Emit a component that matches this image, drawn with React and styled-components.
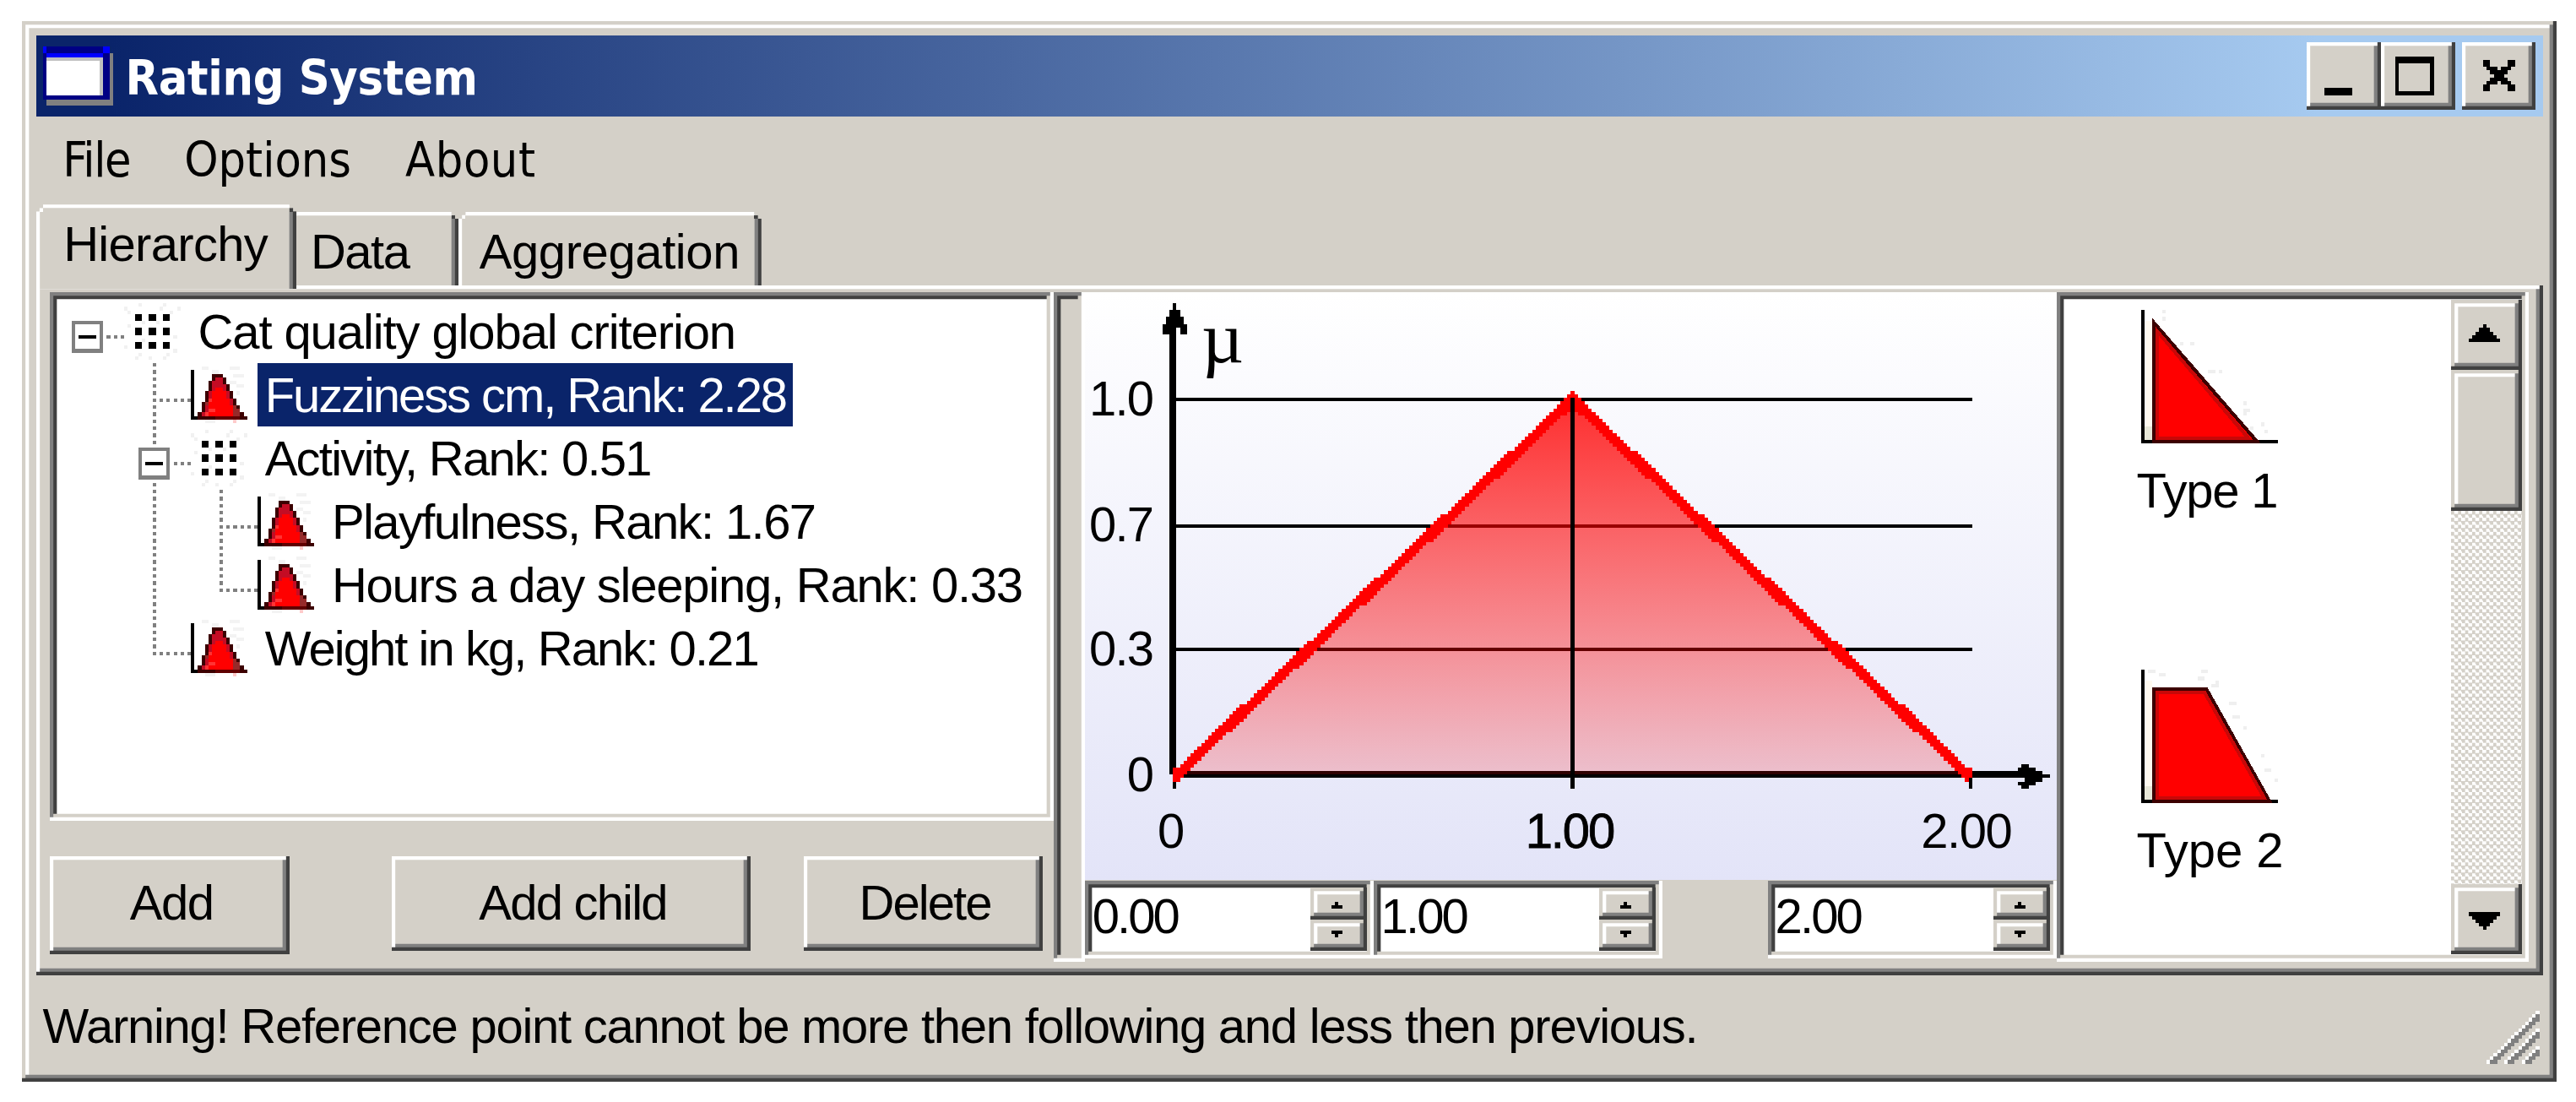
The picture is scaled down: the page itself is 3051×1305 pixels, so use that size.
import React from 'react';
import styled, { createGlobalStyle, css } from 'styled-components';

// One unit is one pixel of the classic desktop theme.
const u = n => `${(n * 4.17).toFixed(2)}px`;

const colors = {
  face: '#d4d0c8',
  light: '#fff',
  shadow: '#808080',
  dark: '#404040',
  highlight: '#0a246a',
};

const GlobalStyle = createGlobalStyle`
  body {
    margin: 0;
    background: #fff;
    overflow: hidden;
  }
`;

const raised = css`
  box-shadow: inset -${u(1)} -${u(1)} ${colors.dark}, inset ${u(1)} ${u(1)} ${colors.light},
    inset -${u(2)} -${u(2)} ${colors.shadow};
`;

const raisedSoft = css`
  box-shadow: inset -${u(1)} -${u(1)} ${colors.dark}, inset ${u(1)} ${u(1)} ${colors.face},
    inset -${u(2)} -${u(2)} ${colors.shadow}, inset ${u(2)} ${u(2)} ${colors.light};
`;

const sunken = css`
  box-shadow: inset -${u(1)} -${u(1)} ${colors.light}, inset ${u(1)} ${u(1)} ${colors.shadow},
    inset -${u(2)} -${u(2)} ${colors.face}, inset ${u(2)} ${u(2)} ${colors.dark};
`;

const Window = styled.div`
  box-sizing: border-box;
  width: ${u(720)};
  height: ${u(301)};
  margin: 25.4px 0 0 26px;
  padding: ${u(4)};
  background: ${colors.face};
  font-family: 'Liberation Sans', Arial, sans-serif;
  font-size: 58px;
  color: #000;
  white-space: nowrap;
  ${raisedSoft};
`;

const Text = styled.span`
  letter-spacing: ${({ $spacing }) => $spacing || 0}px;
`;

const TitleBar = styled.header`
  display: flex;
  box-sizing: border-box;
  height: ${u(23)};
  padding: ${u(2)} ${u(2)} 0;
  background: linear-gradient(to right, ${colors.highlight} 3%, #a6caf0 91%);
`;

const Title = styled.h1`
  flex: 1;
  margin: 0 0 0 ${u(3.4)};
  font: bold 57px / ${u(20.5)} 'DejaVu Sans Condensed', Tahoma, sans-serif;
  letter-spacing: -0.3px;
  color: #fff;
`;

const CaptionButton = styled.button`
  width: ${u(21)};
  height: ${u(19)};
  margin-left: ${({ $gap }) => u($gap || 0)};
  padding: 0;
  border: 0;
  background: ${colors.face};
  ${raised};
`;

const Pixels = styled.svg`
  display: block;
  flex: none;
  width: ${({ $w }) => u($w)};
  height: ${({ $h }) => u($h)};
  shape-rendering: crispEdges;
`;

const MenuBar = styled.nav`
  display: flex;
  gap: 64px;
  height: ${u(25)};
  padding-left: ${u(7.6)};
  font: 57px / ${u(24.6)} 'DejaVu Sans Condensed', Tahoma, sans-serif;
`;

const TabStrip = styled.div`
  display: flex;
  align-items: flex-end;
  height: ${u(24)};
  margin-bottom: -${u(1)};
`;

const Tab = styled.div`
  position: relative;
  box-sizing: border-box;
  width: ${({ $w }) => u($w)};
  height: ${({ $active }) => u($active ? 24 : 21)};
  margin: 0 0 ${({ $active }) => u($active ? 0 : 1)} ${({ $tuck }) => u($tuck || 0)};
  padding-left: ${({ $pad }) => u($pad)};
  z-index: ${({ $active }) => ($active ? 1 : 0)};
  background: ${colors.face};
  line-height: ${u(22.5)};
  box-shadow: inset -${u(1)} 0 ${colors.dark}, inset ${u(1)} ${u(1)} ${colors.light},
    inset -${u(2)} 0 ${colors.shadow};
  clip-path: polygon(
    0 ${u(2)},
    ${u(1)} ${u(2)},
    ${u(1)} ${u(1)},
    ${u(2)} ${u(1)},
    ${u(2)} 0,
    calc(100% - ${u(2)}) 0,
    calc(100% - ${u(2)}) ${u(1)},
    calc(100% - ${u(1)}) ${u(1)},
    calc(100% - ${u(1)}) ${u(2)},
    100% ${u(2)},
    100% 100%,
    0 100%
  );

  &::before,
  &::after {
    content: '';
    position: absolute;
    top: ${u(1)};
    left: ${u(1)};
    width: ${u(1)};
    height: ${u(1)};
    background: ${colors.light};
  }

  &::after {
    left: auto;
    right: ${u(1)};
    background: ${colors.dark};
  }
`;

const Page = styled.main`
  display: flex;
  box-sizing: border-box;
  height: ${u(196)};
  padding: ${u(2)} ${u(4)} 0;
  background: ${colors.face};
  ${raised};
`;

const TreeColumn = styled.section`
  width: ${u(285)};
`;

const Tree = styled.ul`
  box-sizing: border-box;
  height: ${u(150)};
  margin: 0;
  padding: ${u(2)};
  background: #fff;
  list-style: none;
  ${sunken};
`;

const TreeRow = styled.li`
  display: flex;
  height: ${u(18)};
  line-height: ${u(18)};
`;

const TreeLabel = styled(Text)`
  margin-left: ${u(3)};
  padding: 0 ${u(2)};

  ${({ $selected }) =>
    $selected &&
    css`
      background: ${colors.highlight};
      color: #fff;
    `};
`;

const Actions = styled.div`
  display: flex;
  align-items: flex-start;
  margin-top: ${u(10)};
`;

const ActionButton = styled.button`
  display: flex;
  align-items: flex-start;
  justify-content: center;
  width: ${({ $w }) => u($w)};
  height: ${({ $h }) => u($h)};
  margin: 0 ${({ $gap }) => u($gap || 0)} 0 0;
  padding: 0 0 0 ${u(1)};
  border: 0;
  background: ${colors.face};
  font: inherit;
  line-height: ${u(26.6)};
  color: inherit;
  ${raised};
`;

const Splitter = styled.div`
  width: ${u(9)};
  height: ${u(190)};
  background: ${colors.face};
  ${sunken};
`;

const ChartColumn = styled.section`
  width: ${u(276)};
`;

const Chart = styled.svg`
  display: block;
  width: ${u(276)};
  height: ${u(167)};
  font-family: 'Liberation Sans', Arial, sans-serif;
  font-size: 13.9px;
`;

const SpinRow = styled.div`
  display: flex;
`;

const SpinBox = styled.div`
  display: flex;
  justify-content: space-between;
  box-sizing: border-box;
  width: ${u(82)};
  height: ${u(22)};
  margin-left: ${({ $gap }) => u($gap || 0)};
  padding: ${u(2)};
  background: #fff;
  line-height: ${u(16.3)};
  ${sunken};
`;

const SpinButtons = styled.div`
  width: ${u(16)};
`;

const SpinButton = styled.div`
  height: ${u(9)};
  background: ${colors.face};
  ${raisedSoft};
`;

const Gallery = styled.section`
  display: flex;
  box-sizing: border-box;
  width: ${u(134)};
  height: ${u(190)};
  padding: ${u(2)};
  background: #fff;
  ${sunken};
`;

const GalleryList = styled.div`
  flex: 1;
  padding: ${u(3)} 0 0 ${u(20.6)};
`;

const GalleryItem = styled.figure`
  height: ${u(102)};
  margin: 0;
`;

const Caption = styled.figcaption`
  margin-top: ${u(4.2)};
  line-height: ${u(18)};
`;

const ScrollBar = styled.div`
  display: flex;
  flex-direction: column;
  width: ${u(20)};
  background: repeating-conic-gradient(#fff 0 25%, ${colors.face} 0 50%) 0 0 / ${u(2)} ${u(2)};
`;

const ScrollButton = styled.div`
  height: ${({ $h }) => u($h)};
  background: ${colors.face};
  ${raisedSoft};

  &:last-child {
    margin-top: auto;
  }
`;

const StatusBar = styled.footer`
  display: flex;
  justify-content: space-between;
  align-items: flex-end;
  box-sizing: border-box;
  height: ${u(26)};
  padding: 0 ${u(1)} ${u(1)} ${u(1.9)};
`;

const StatusText = styled(Text)`
  height: ${u(25)};
  line-height: ${u(28.6)};
`;

// rows: [y, x0, x1]
const spans = rows => rows.map(([y, x0, x1]) => `M${x0} ${y}H${x1}V${y + 1}H${x0}Z`).join('');

const CROSS = spans([
  [0, 0, 2], [0, 7, 9], [1, 0, 2], [1, 7, 9],
  [2, 1, 4], [2, 5, 8], [3, 2, 7], [4, 3, 6], [5, 2, 7], [6, 1, 4], [6, 5, 8],
  [7, 0, 2], [7, 7, 9], [8, 0, 2], [8, 7, 9],
]);

const BELL = [
  [2, 6, 9], [3, 6, 10], [4, 5, 10], [5, 5, 11], [6, 5, 11], [7, 4, 12], [8, 4, 12],
  [9, 4, 13], [10, 3, 13], [11, 3, 14], [12, 3, 14], [13, 2, 15], [14, 2, 16],
];

const BELL_FILL = BELL.slice(1, -1).map(([y, a, b]) => [y, a + 1, b - 1]);
const BELL_CORE = BELL.slice(4, -1).map(([y, a, b]) => [y, a + 2, b - 2]);

const TitleIcon = styled(Pixels)`
  margin-top: ${u(1)};
`;

function AppIcon() {
  return (
    <TitleIcon $w={20} $h={17} viewBox="0 0 20 17">
      <path fill="#808080" d="M1 2H20V17H1Z" />
      <path fill="#000084" d="M0 0H19V15H0Z" />
      <path fill="#00f" d="M0 0H1V2H0ZM17 0H19V2H17ZM1 2H17V3H1Z" />
      <path fill="#c0c0c0" d="M1 3H17V14H1Z" />
      <path fill="#fff" d="M1 4H16V14H1Z" />
    </TitleIcon>
  );
}

function BellIcon() {
  return (
    <Pixels $w={16} $h={18} viewBox="0 -1 16 18">
      <path
        fill="#f3f3f3"
        d={spans([
          [0, 3, 5], [1, 6, 8], [0, 11, 14], [2, 12, 15], [4, 11, 13],
          [5, 13, 15], [7, 13, 14], [15, 4, 7],
        ])}
      />
      <path fill="#ffcaca" d="M12 15H13V16H12Z" />
      <path d="M0 1H1V14H16V15H0Z" />
      <path fill="#3c0000" d={spans(BELL)} />
      <path fill="#c40c24" d={spans(BELL_FILL)} />
      <path fill="#f00" d={spans(BELL_CORE)} />
      <path fill="#962a2a" d="M12 11H13V14H12ZM13 12H14V14H13ZM4 10H5V11H4Z" />
      <path fill="#f33" d="M5 9H6V10H5ZM5 12H7V13H5ZM4 13H5V14H4Z" />
      <path fill="#600000" d="M7 14H14V15H7Z" />
    </Pixels>
  );
}

function GroupIcon() {
  const dots = [3, 7, 11];

  return (
    <Pixels $w={16} $h={18} viewBox="0 -1 16 18">
      <path
        fill="#f1f1f1"
        d={spans([
          [0, 4, 5], [1, 0, 1], [0, 11, 12], [1, 10, 11], [2, 1, 2], [1, 15, 16], [2, 13, 14], [5, 5, 6],
          [5, 9, 10], [6, 1, 2], [9, 14, 15], [10, 5, 6], [12, 0, 1], [13, 14, 15], [14, 4, 5],
          [14, 12, 13], [15, 3, 4], [15, 7, 8], [15, 11, 12],
        ])}
      />
      {dots.map(y => dots.map(x => <rect key={`${x}-${y}`} x={x} y={y} width="2" height="2" />))}
    </Pixels>
  );
}

function TreeGutter({ depth, expandable, top, through }) {
  const width = 19 * (depth + 1);
  const dots = [];

  const addColumn = (level, from, to) => {
    for (let y = from; y < to; y += 2) {
      dots.push([y, 8 + 19 * level, 9 + 19 * level]);
    }
  };

  if (expandable) {
    for (let x = 14; x < 19; x += 2) {
      dots.push([10, x + 19 * depth, x + 1 + 19 * depth]);
    }
  } else {
    for (let x = -11; x < 0; x += 2) {
      dots.push([10, width + x, width + x + 1]);
    }
  }

  if (top) {
    addColumn(depth, 0, expandable ? 6 : 11);
  }

  through.forEach(level => addColumn(level, level === depth && expandable ? 16 : 0, 18));

  return (
    <Pixels $w={width} $h={18} viewBox={`0 0 ${width} 18`}>
      <path fill="#808080" d={spans(dots)} />
      {expandable ? (
        <g transform={`translate(${19 * depth + 4} 6)`}>
          <path fill="#808080" d="M0 0H9V9H0Z" />
          <path fill="#fff" d="M1 1H8V8H1Z" />
          <path d="M2 4H7V5H2Z" />
        </g>
      ) : null}
    </Pixels>
  );
}

const TREE = [
  { text: 'Cat quality global criterion', spacing: -1.1, depth: 0, expandable: true, through: [] },
  { text: 'Fuzziness cm, Rank: 2.28', spacing: -2.08, depth: 1, top: true, through: [1], selected: true },
  { text: 'Activity, Rank: 0.51', spacing: -1.75, depth: 1, top: true, expandable: true, through: [1] },
  { text: 'Playfulness, Rank: 1.67', spacing: -1.6, depth: 2, top: true, through: [1, 2] },
  { text: 'Hours a day sleeping, Rank: 0.33', spacing: -1.24, depth: 2, top: true, through: [1] },
  { text: 'Weight in kg, Rank: 0.21', spacing: -1.95, depth: 1, top: true, through: [] },
];

// Stepped pen line from the origin to the peak, mirrored for the falling side.
const PEN_ROWS = [];
for (let y = 28; y < 139; y += 1) {
  const x0 = Math.max(25, 165 - y - Math.floor((y - 45) / 18));
  const x1 = Math.min(139, 169 - y - Math.floor((y - 53) / 18));

  PEN_ROWS.push([y, x0, Math.max(x1, x0 + 1)], [y, 277 - Math.max(x1, x0 + 1), 277 - x0]);
}

const ARROW_UP = [
  [3, 25, 26], [4, 25, 26], [5, 24, 27], [6, 24, 27], [7, 23, 28], [8, 23, 28],
  [9, 22, 29], [10, 22, 26], [10, 27, 29], [11, 22, 24], [11, 27, 29],
];

const ARROW_RIGHT = [
  [134, 266, 268], [135, 265, 270], [136, 267, 272], [137, 266, 274],
  [138, 267, 272], [139, 265, 270], [140, 266, 268],
];

function MembershipChart() {
  return (
    <Chart viewBox="0 0 276 167">
      <defs>
        <linearGradient id="sky" x1="0" y1="0" x2="0" y2="1">
          <stop offset="0" stopColor="#fff" />
          <stop offset="1" stopColor="#e3e4f8" />
        </linearGradient>
        <linearGradient id="area" x1="0" y1="0" x2="0" y2="1">
          <stop offset="0" stopColor="#f00" stopOpacity="0.82" />
          <stop offset="1" stopColor="#f00" stopOpacity="0.18" />
        </linearGradient>
      </defs>
      <g shapeRendering="crispEdges">
        <path fill="url(#sky)" d="M0 0H276V167H0Z" />
        <path d="M26 30H252V31H26ZM26 66H252V67H26ZM26 101H252V102H26Z" />
        <path d="M24 8H26V137H24ZM26 136H267V138H26Z" />
        <path d={spans(ARROW_UP)} />
        <path d={spans(ARROW_RIGHT)} />
        <path fill="url(#area)" d="M25.5 137L138.5 30L251.5 137Z" />
        <path fill="#f00" d={spans(PEN_ROWS)} />
        <path d="M138 30H139V141H138ZM25 139H26V141H25ZM251 138H252V141H251Z" />
      </g>
      <text x="33.1" y="20" fontFamily="'Liberation Serif', 'Times New Roman', serif" fontSize="20.8">
        µ
      </text>
      <g textAnchor="end" letterSpacing="-0.45">
        <text x="19.2" y="34.9">1.0</text>
        <text x="19.2" y="70.8">0.7</text>
        <text x="19.2" y="106">0.3</text>
        <text x="19.2" y="141.8">0</text>
      </g>
      <g letterSpacing="-0.35">
        <text x="20.6" y="157.9">0</text>
        <text x="125.1" y="157.9" stroke="#000" strokeWidth="0.2" letterSpacing="-0.5">1.00</text>
        <text x="237.5" y="157.9">2.00</text>
      </g>
    </Chart>
  );
}

function Spin({ value, gap }) {
  return (
    <SpinBox $gap={gap}>
      <Text $spacing={-2.9}>{value}</Text>
      <SpinButtons>
        <SpinButton>
          <Pixels $w={16} $h={9} viewBox="0 0 16 9">
            <path d="M7 4H8V5H9V6H6V5H7Z" />
          </Pixels>
        </SpinButton>
        <SpinButton>
          <Pixels $w={16} $h={9} viewBox="0 0 16 9">
            <path d="M6 3H9V4H8V5H7V4H6Z" />
          </Pixels>
        </SpinButton>
      </SpinButtons>
    </SpinBox>
  );
}

const SHAPES = [
  {
    name: 'Type 1',
    spacing: -1.2,
    outline: 'M3.5 3.5L33 37.5H3.5Z',
    edge: 'M4.5 6L30.5 36.5H4.5Z',
    specks: [
      [2, 6, 7], [0, 6, 7], [9, 11, 12], [9, 14, 15], [17, 19, 21], [17, 22, 23],
      [26, 29, 30], [28, 29, 31], [29, 29, 30], [32, 34, 35], [34, 35, 36], [33, 31, 32],
    ],
  },
  {
    name: 'Type 2',
    spacing: 0,
    outline: 'M3.5 5.5H18.5L36.5 37.5H3.5Z',
    edge: 'M4.5 6.5H18L35 36.5H4.5Z',
    specks: [
      [0, 2, 4], [1, 5, 7], [0, 17, 19], [2, 16, 18], [3, 21, 22], [4, 20, 22],
      [9, 25, 27], [13, 26, 28], [16, 29, 30], [24, 34, 35], [28, 35, 37], [31, 38, 39],
    ],
  },
];

const ShapePixels = styled(Pixels)`
  margin-left: ${u(1.3)};
`;

function ShapeIcon({ outline, edge, specks }) {
  return (
    <ShapePixels $w={39} $h={38} viewBox="0 0 39 38">
      <path fill="#efefef" d={spans(specks)} />
      <path fill="#fffaf0" d="M1 3H3V33H1Z" />
      <path fill="#e8e8d8" d="M1 33H3V37H1Z" />
      <path d="M0 0H1V37H39V38H0Z" />
      <path fill="#f00" stroke="#3c0000" d={outline} />
      <path fill="#f00" stroke="#c80808" d={edge} />
    </ShapePixels>
  );
}

function ResizeGrip() {
  const white = [];
  const gray = [];

  [0, 5, 10].forEach(start => {
    for (let x = start; x < 15; x += 1) {
      const y = 14 - (x - start);

      white.push([y, x, x + 1]);
      gray.push([y, Math.min(x + 1, 15), Math.min(x + 3, 15)]);
    }
  });

  return (
    <Pixels $w={15} $h={15} viewBox="0 0 15 15">
      <path fill="#808080" d={spans(gray)} />
      <path fill="#fff" d={spans(white)} />
    </Pixels>
  );
}

export default function App() {
  return (
    <Window>
      <GlobalStyle />
      <TitleBar>
        <AppIcon />
        <Title>Rating System</Title>
        <CaptionButton aria-label="Minimize">
          <Pixels $w={21} $h={19} viewBox="0 0 21 19">
            <path d="M5 13H13V15H5Z" />
          </Pixels>
        </CaptionButton>
        <CaptionButton aria-label="Maximize">
          <Pixels $w={21} $h={19} viewBox="0 0 21 19">
            <path fillRule="evenodd" d="M4 4H15V15H4ZM5 6V14H14V6Z" />
          </Pixels>
        </CaptionButton>
        <CaptionButton aria-label="Close" $gap={2}>
          <Pixels $w={21} $h={19} viewBox="-6 -5 21 19">
            <path d={CROSS} />
          </Pixels>
        </CaptionButton>
      </TitleBar>
      <MenuBar>
        <Text $spacing={-1.4}>File</Text>
        <Text $spacing={0}>Options</Text>
        <Text $spacing={0.6}>About</Text>
      </MenuBar>
      <TabStrip>
        <Tab $active $w={74} $pad={7.8}>
          <Text $spacing={-0.7}>Hierarchy</Text>
        </Tab>
        <Tab $w={48} $pad={6} $tuck={-2}>
          <Text $spacing={-1.5}>Data</Text>
        </Tab>
        <Tab $w={86} $pad={5.9}>
          <Text $spacing={-0.4}>Aggregation</Text>
        </Tab>
      </TabStrip>
      <Page>
        <TreeColumn>
          <Tree>
            {TREE.map(({ text, spacing, selected, ...gutter }) => (
              <TreeRow key={text}>
                <TreeGutter {...gutter} />
                {gutter.expandable ? <GroupIcon /> : <BellIcon />}
                <TreeLabel $spacing={spacing} $selected={selected}>
                  {text}
                </TreeLabel>
              </TreeRow>
            ))}
          </Tree>
          <Actions>
            <ActionButton $w={68} $h={28} $gap={29}>
              <Text $spacing={-1.47}>Add</Text>
            </ActionButton>
            <ActionButton $w={102} $h={27} $gap={15}>
              <Text $spacing={-1.8}>Add child</Text>
            </ActionButton>
            <ActionButton $w={68} $h={27}>
              <Text $spacing={-1.9}>Delete</Text>
            </ActionButton>
          </Actions>
        </TreeColumn>
        <Splitter />
        <ChartColumn>
          <MembershipChart />
          <SpinRow>
            <Spin value="0.00" />
            <Spin value="1.00" />
            <Spin value="2.00" gap={30} />
          </SpinRow>
        </ChartColumn>
        <Gallery>
          <GalleryList>
            {SHAPES.map(({ name, spacing, ...shape }) => (
              <GalleryItem key={name}>
                <ShapeIcon {...shape} />
                <Caption>
                  <Text $spacing={spacing}>{name}</Text>
                </Caption>
              </GalleryItem>
            ))}
          </GalleryList>
          <ScrollBar>
            <ScrollButton $h={20}>
              <Pixels $w={20} $h={20} viewBox="0 0 20 20">
                <path d={spans([[7, 9, 10], [8, 8, 11], [9, 7, 12], [10, 6, 13], [11, 5, 14]])} />
              </Pixels>
            </ScrollButton>
            <ScrollButton $h={40} />
            <ScrollButton $h={20}>
              <Pixels $w={20} $h={20} viewBox="0 0 20 20">
                <path d={spans([[8, 5, 14], [9, 6, 13], [10, 7, 12], [11, 8, 11], [12, 9, 10]])} />
              </Pixels>
            </ScrollButton>
          </ScrollBar>
        </Gallery>
      </Page>
      <StatusBar>
        <StatusText $spacing={-1.26}>
          Warning! Reference point cannot be more then following and less then previous.
        </StatusText>
        <ResizeGrip />
      </StatusBar>
    </Window>
  );
}
